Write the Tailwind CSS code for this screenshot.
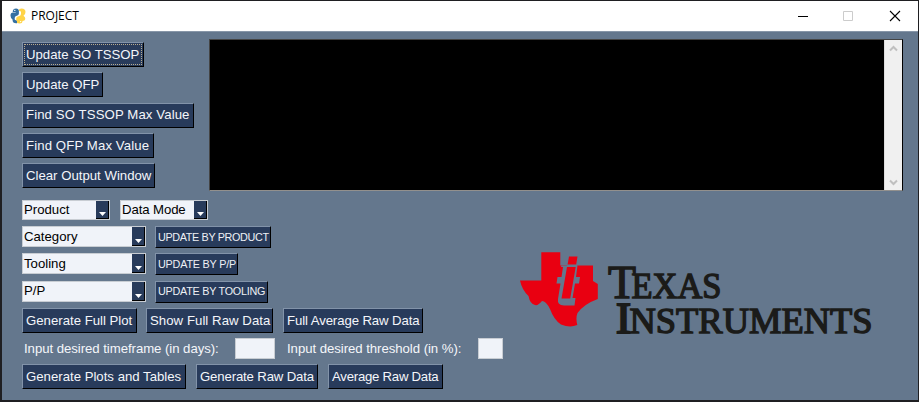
<!DOCTYPE html>
<html lang="en">
<head>
<meta charset="utf-8">
<title>PROJECT</title>
<script src="https://cdn.jsdelivr.net/npm/@tailwindcss/browser@4"></script>
</head>
<body class="w-[919px] h-[402px] overflow-hidden bg-[#1f1f22] pl-[2px] pt-px pr-px font-['Liberation_Sans',Arial,sans-serif] text-[13.2px] leading-none text-[#f4f6fa]">
<div class="relative flex h-[399px] flex-col bg-[#64778d]">
  <header class="flex h-[31px] shrink-0 items-center border-b border-[#8796a8] bg-white text-black">
    <svg class="ml-2 size-4 shrink-0" viewBox="0 0 16 16">
      <path fill="#ffd448" d="M8.500 2.800Q9 .5 11.500.5Q15.500.5 15.500 4Q15.500 6.200 13.500 7.800Q15.500 9 15.300 11Q15 12.800 12.500 13Q12.500 15.500 9.500 15.500Q6.200 15.500 6.200 13V10.500Q6.200 8.700 8.500 8.300Q11 8 11 6V3.500Z"/>
      <path fill="#3470a2" d="M2.800 2.800Q3.300.5 6 .5Q8.900 .5 8.900 3V5.500Q8.900 7.400 6.800 7.800Q4.700 8.200 4.700 10V11.500L7 13V15.300Q2.500 15.800 2.500 11.500Q.5 10.300.5 7.600Q.5 4.700 3 4.500H5.700V3.900H2.800Z"/>
      <circle cx="4.800" cy="2.400" r=".7" fill="#fff"/><circle cx="10.600" cy="13.600" r=".7" fill="#fff"/>
    </svg>
    <span class="ml-[5px] font-['Open_Sans',sans-serif] text-[12px] tracking-[-0.02px]">PROJECT</span>
    <svg class="ml-auto mr-[14px] h-[12px] w-[106px]" viewBox="0 0 106 12" fill="none">
      <path d="M0 6.500H10" stroke="#000"/><path d="M45.500 1.500h9v9h-9z" stroke="#ccc"/><path d="M92 1l10 10M102 1l-10 10" stroke="#000" stroke-width="1.100"/>
    </svg>
  </header>
  <main class="flex flex-col pl-5">
    <section class="flex h-[160px] pt-[7px]">
      <div class="flex w-[187px] flex-col items-start gap-[5.300px] pt-[3px]">
        <button class="h-[25px] w-[122px] border border-t-[#8293a9] border-l-[#8293a9] border-r-black border-b-black bg-[#283b5b] p-px"><span class="flex h-full items-center border border-dotted border-[#b9ad91] pl-px whitespace-nowrap">Update SO TSSOP</span></button>
        <button class="h-[25px] w-[81px] border border-t-[#8293a9] border-l-[#8293a9] border-r-black border-b-black bg-[#283b5b] pl-[3px] text-left whitespace-nowrap">Update QFP</button>
        <button class="h-[25px] w-[172px] border border-t-[#8293a9] border-l-[#8293a9] border-r-black border-b-black bg-[#283b5b] pl-[3px] text-left tracking-[0.1px] whitespace-nowrap">Find SO TSSOP Max Value</button>
        <button class="h-[25px] w-[132px] border border-t-[#8293a9] border-l-[#8293a9] border-r-black border-b-black bg-[#283b5b] pl-[3px] text-left tracking-[0.11px] whitespace-nowrap">Find QFP Max Value</button>
        <button class="h-[25px] w-[133px] border border-t-[#8293a9] border-l-[#8293a9] border-r-black border-b-black bg-[#283b5b] pl-[3px] text-left whitespace-nowrap">Clear Output Window</button>
      </div>
      <div class="flex h-[152px] w-[694px] justify-end border border-t-[#444] border-l-[#444] border-b-[#92908d] border-r-black bg-black">
        <div class="flex w-[18px] flex-col items-center justify-between border-l border-[#ddd] bg-[#f0f0f0] pt-[5px] pb-[4px]">
          <svg class="h-[7px] w-[9px]" viewBox="0 0 9 7" fill="none" stroke="#bfbfbf" stroke-width="2"><path d="M1 5.500l3.500-3.500 3.500 3.500"/></svg>
          <svg class="h-[7px] w-[9px]" viewBox="0 0 9 7" fill="none" stroke="#bfbfbf" stroke-width="2"><path d="M1 1.500l3.500 3.500 3.500-3.500"/></svg>
        </div>
      </div>
    </section>
    <section class="flex h-[34px] gap-[10px] pt-2 text-black">
      <div class="flex h-5 w-[88px] items-center justify-between border border-[#c8cdd3] bg-[#f0f3f9] pl-px"><span>Product</span><span class="flex h-full w-[13px] items-end justify-center border-r border-b border-black bg-[#283b5b] pb-[2px]"><svg class="h-1 w-[7px]" viewBox="0 0 7 4"><path fill="#fff" d="M0 0h7L3.500 4z"/></svg></span></div>
      <div class="flex h-5 w-[88px] items-center justify-between border border-[#c8cdd3] bg-[#f0f3f9] pl-px"><span class="tracking-[-0.1px]">Data Mode</span><span class="flex h-full w-[13px] items-end justify-center border-r border-b border-black bg-[#283b5b] pb-[2px]"><svg class="h-1 w-[7px]" viewBox="0 0 7 4"><path fill="#fff" d="M0 0h7L3.500 4z"/></svg></span></div>
    </section>
    <section class="flex h-[82px] flex-col gap-[5.300px] text-black">
      <div class="flex h-[22px] gap-[9px]">
        <div class="flex h-[21px] w-[124px] items-center justify-between border border-[#c8cdd3] bg-[#f0f3f9] pl-px"><span>Category</span><span class="flex h-full w-[13px] items-end justify-center border-r border-b border-black bg-[#283b5b] pb-[2px]"><svg class="h-1 w-[7px]" viewBox="0 0 7 4"><path fill="#fff" d="M0 0h7L3.500 4z"/></svg></span></div>
        <button class="w-[116px] border border-t-[#8293a9] border-l-[#8293a9] border-r-black border-b-black bg-[#283b5b] pl-[2px] text-left text-[10.800px] tracking-[-0.35px] whitespace-nowrap text-[#eef0f4]">UPDATE BY PRODUCT</button>
      </div>
      <div class="flex h-[22px] gap-[9px]">
        <div class="flex h-[21px] w-[124px] items-center justify-between border border-[#c8cdd3] bg-[#f0f3f9] pl-px"><span>Tooling</span><span class="flex h-full w-[13px] items-end justify-center border-r border-b border-black bg-[#283b5b] pb-[2px]"><svg class="h-1 w-[7px]" viewBox="0 0 7 4"><path fill="#fff" d="M0 0h7L3.500 4z"/></svg></span></div>
        <button class="w-[83px] border border-t-[#8293a9] border-l-[#8293a9] border-r-black border-b-black bg-[#283b5b] pl-[2px] text-left text-[10.800px] tracking-[-0.2px] whitespace-nowrap text-[#eef0f4]">UPDATE BY P/P</button>
      </div>
      <div class="flex h-[22px] gap-[9px]">
        <div class="flex h-[21px] w-[124px] items-center justify-between border border-[#c8cdd3] bg-[#f0f3f9] pl-px"><span>P/P</span><span class="flex h-full w-[13px] items-end justify-center border-r border-b border-black bg-[#283b5b] pb-[2px]"><svg class="h-1 w-[7px]" viewBox="0 0 7 4"><path fill="#fff" d="M0 0h7L3.500 4z"/></svg></span></div>
        <button class="w-[113px] border border-t-[#8293a9] border-l-[#8293a9] border-r-black border-b-black bg-[#283b5b] pl-[2px] text-left text-[10.800px] tracking-[-0.25px] whitespace-nowrap text-[#eef0f4]">UPDATE BY TOOLING</button>
      </div>
    </section>
    <section class="flex h-[25px] gap-[10px]">
      <button class="w-[115px] border border-t-[#8293a9] border-l-[#8293a9] border-r-black border-b-black bg-[#283b5b] pl-[3px] text-left whitespace-nowrap">Generate Full Plot</button>
      <button class="-ml-px w-[127px] border border-t-[#8293a9] border-l-[#8293a9] border-r-black border-b-black bg-[#283b5b] pl-[3px] text-left tracking-[0.05px] whitespace-nowrap">Show Full Raw Data</button>
      <button class="w-[140px] border border-t-[#8293a9] border-l-[#8293a9] border-r-black border-b-black bg-[#283b5b] pl-[3px] text-left tracking-[-0.1px] whitespace-nowrap">Full Average Raw Data</button>
    </section>
    <section class="flex h-[31px] items-center pl-[2px] tracking-[-0.05px]">
      <label class="w-[211px] whitespace-nowrap">Input desired timeframe (in days):</label>
      <div class="h-[21px] w-10 border border-[#c8cdd3] bg-[#f0f3f9]"></div>
      <label class="ml-3 w-[191px] whitespace-nowrap">Input desired threshold (in %):</label>
      <div class="h-[21px] w-[25px] border border-[#c8cdd3] bg-[#f0f3f9]"></div>
    </section>
    <section class="flex h-[25px] gap-[10px]">
      <button class="w-[164px] border border-t-[#8293a9] border-l-[#8293a9] border-r-black border-b-black bg-[#283b5b] pl-[3px] text-left whitespace-nowrap">Generate Plots and Tables</button>
      <button class="w-[122px] border border-t-[#8293a9] border-l-[#8293a9] border-r-black border-b-black bg-[#283b5b] pl-[3px] text-left tracking-[-0.15px] whitespace-nowrap">Generate Raw Data</button>
      <button class="w-[115px] border border-t-[#8293a9] border-l-[#8293a9] border-r-black border-b-black bg-[#283b5b] pl-[3px] text-left tracking-[-0.25px] whitespace-nowrap">Average Raw Data</button>
    </section>
  </main>
  <svg class="absolute top-[239px] left-[508px] h-[110px] w-[370px]" viewBox="510 240 370 110">
    <path fill="#e90011" d="M541.300 252.300H560.300V265.500H593V281L597.800 284V299Q584 304 577.500 313Q575.500 318 577.300 325Q570 328 561 324.500Q554 320 550 309Q546 301 542 301Q538 306 535 305Q530 304 528.500 296Q522 290 520 280.500H541.300Z"/>
    <path fill="#64778d" d="M568.500 256H579L577.300 265.500H566.800ZM561.500 265.500H577.500L576 277H580L579 283.500H575L572.500 298H575.500L574.500 305.500H564Q557 305 558 299L560.500 283.500H556.500L557.500 277H561.500L563 267H561Z"/>
    <path fill="#e90011" d="M569 256.500H577.500L576.200 264.500H567.600ZM567 267H575.700L570.200 298.500H561.500Z"/>
    <g fill="#1b1b19" stroke="#1b1b19" stroke-width="1.400" font-family="'Liberation Serif',serif">
      <text y="297.500"><tspan x="608" font-size="46" textLength="28" lengthAdjust="spacingAndGlyphs">T</tspan><tspan x="631.500" font-size="35.500" textLength="90" lengthAdjust="spacingAndGlyphs">EXAS</tspan></text>
      <text y="333.200"><tspan x="616" font-size="45" stroke-width="2.200">I</tspan><tspan x="629.500" font-size="35.500" textLength="243" lengthAdjust="spacingAndGlyphs">NSTRUMENTS</tspan></text>
    </g>
  </svg>
</div>
</body>
</html>
